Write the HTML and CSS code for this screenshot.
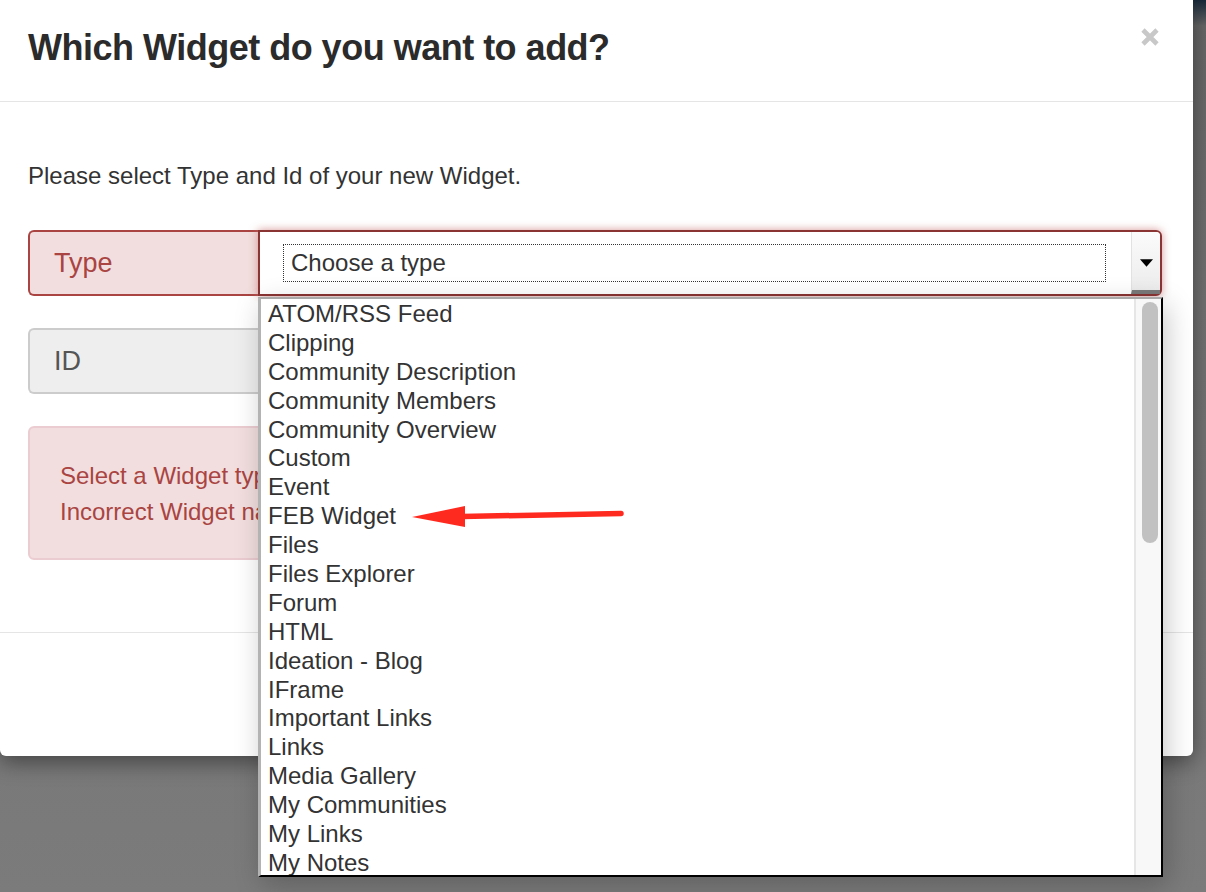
FILE: index.html
```html
<!DOCTYPE html>
<html lang="en">
<head>
<meta charset="utf-8">
<title>Which Widget do you want to add?</title>
<link rel="stylesheet" href="styles.css">
</head>
<body>
<div class="backdrop">
  <div class="modal">
    <div class="modal-header">
      <h4 class="modal-title">Which Widget do you want to add?</h4>
      <button class="close" type="button" aria-label="Close">
        <svg width="20" height="20" viewBox="0 0 20 20"><path d="M3 3 L17 17 M17 3 L3 17" stroke="#c8c8c8" stroke-width="4.6" stroke-linecap="butt"/></svg>
      </button>
    </div>
    <div class="modal-body">
      <p class="intro">Please select Type and Id of your new Widget.</p>
      <div class="input-group has-error">
        <span class="addon addon-error">Type</span>
        <div class="select-wrap">
          <div class="select-box">
            <span class="select-focus">Choose a type</span>
            <span class="select-btn">
              <svg width="14" height="8" viewBox="0 0 14 8"><path d="M0 0 H14 L7 8 Z" fill="#000"/></svg>
            </span>
          </div>
          <div class="dropdown">
            <ul class="options">
              <li>ATOM/RSS Feed</li>
              <li>Clipping</li>
              <li>Community Description</li>
              <li>Community Members</li>
              <li>Community Overview</li>
              <li>Custom</li>
              <li>Event</li>
              <li>FEB Widget</li>
              <li>Files</li>
              <li>Files Explorer</li>
              <li>Forum</li>
              <li>HTML</li>
              <li>Ideation - Blog</li>
              <li>IFrame</li>
              <li>Important Links</li>
              <li>Links</li>
              <li>Media Gallery</li>
              <li>My Communities</li>
              <li>My Links</li>
              <li>My Notes</li>
            </ul>
            <div class="scrolltrack"><div class="scrollthumb"></div></div>
          </div>
        </div>
      </div>
      <div class="input-group">
        <span class="addon addon-plain">ID</span>
        <div class="id-input"></div>
      </div>
      <div class="alert">
        <p>Select a Widget type.</p>
        <p>Incorrect Widget name.</p>
      </div>
    </div>
    <div class="modal-footer"></div>
    <svg class="annot-arrow" width="230" height="40" viewBox="0 0 230 40">
      <path d="M52 22.5 L211 19.5" stroke="#ff2a1f" stroke-width="5.5" stroke-linecap="round"/>
      <path d="M2 23 L55 12 L55 33 Z" fill="#ff2a1f"/>
    </svg>
  </div>
</div>
</body>
</html>
```
FILE: styles.css
```css
html, body {
  margin: 0;
  padding: 0;
}
body {
  width: 1206px;
  height: 892px;
  overflow: hidden;
  background: linear-gradient(180deg, #182838 0px, #2f3b47 8px, #686868 26px, #727272 300px, #7b7b7b 892px);
  font-family: "Liberation Sans", Arial, Helvetica, sans-serif;
  color: #333;
}
.backdrop {
  width: 1206px;
  height: 892px;
}
.modal {
  position: relative;
  width: 1193px;
  background: #fff;
  border-radius: 0 0 6px 6px;
  box-shadow: 0 6px 22px rgba(0, 0, 0, 0.45);
}
.modal-header {
  display: flex;
  justify-content: space-between;
  align-items: flex-start;
  padding: 26px 33px 31px 28px;
  border-bottom: 1px solid #e5e5e5;
}
.modal-title {
  margin: 0;
  font-size: 36px;
  line-height: 44px;
  font-weight: bold;
  color: #2b2b2b;
  letter-spacing: -0.5px;
}
.close {
  margin: 1px 0 0 0;
  padding: 0;
  border: 0;
  background: transparent;
  width: 20px;
  height: 20px;
  display: block;
}
.close svg {
  display: block;
}
.modal-body {
  padding: 57px 31px 72px 28px;
}
.intro {
  margin: 0 0 37px 0;
  font-size: 24px;
  line-height: 34px;
  color: #333;
}
.input-group {
  display: flex;
  height: 66px;
  margin-bottom: 32px;
}
.addon {
  box-sizing: border-box;
  width: 230px;
  height: 66px;
  display: flex;
  align-items: center;
  padding-left: 24px;
  font-size: 27px;
  border-radius: 6px 0 0 6px;
  border-width: 2px 0 2px 2px;
  border-style: solid;
}
.addon-error {
  background: #f2dede;
  border-color: #a94442;
  color: #a94442;
}
.addon-plain {
  background: #eeeeee;
  border-color: #cccccc;
  color: #555;
}
.select-wrap {
  position: relative;
  flex: 1;
}
.select-box {
  box-sizing: border-box;
  height: 66px;
  display: flex;
  align-items: center;
  padding-left: 23px;
  border: 2px solid #8a3434;
  border-radius: 0 6px 6px 0;
  background: #fff;
  box-shadow: 0 0 9px rgba(206, 132, 131, 0.85);
}
.select-focus {
  flex: 1;
  box-sizing: border-box;
  height: 38px;
  line-height: 36px;
  border: 1px dotted #333;
  padding-left: 7px;
  font-size: 24px;
  color: #333;
  margin-right: 25px;
}
.select-btn {
  box-sizing: border-box;
  align-self: stretch;
  width: 29px;
  display: flex;
  align-items: center;
  justify-content: center;
  background: linear-gradient(180deg, #fbfbfb, #ececec);
  border-bottom: 4px solid #7a7a7a;
  border-left: 1px solid #e2e2e2;
  padding-top: 3px;
  border-radius: 0 4px 0 0;
}
.select-btn svg {
  display: block;
  width: 13px;
  height: 8px;
}
.dropdown {
  position: absolute;
  top: 67px;
  left: 0;
  right: -1px;
  height: 580px;
  box-sizing: border-box;
  display: flex;
  background: #fff;
  border-top: 2px solid #a9a9a9;
  border-left: 3px solid #b3b3b3;
  border-right: 2px solid #000;
  border-bottom: 2px solid #000;
  box-shadow: 4px 8px 26px rgba(0, 0, 0, 0.22);
  z-index: 5;
}
.options {
  flex: 1;
  list-style: none;
  margin: 0;
  padding: 1px 0 0 7px;
  overflow: hidden;
}
.options li {
  font-size: 24px;
  line-height: 28.9px;
  height: 28.9px;
  color: #333;
  white-space: nowrap;
}
.scrolltrack {
  width: 27px;
  background: #f8f8f8;
  border-left: 2px solid #e6e6e6;
  padding: 3px 5px 0 6px;
  box-sizing: border-box;
}
.scrollthumb {
  width: 16px;
  height: 241px;
  border-radius: 8px;
  background: #c1c1c1;
}
.id-input {
  flex: 1;
  box-sizing: border-box;
  height: 66px;
  border: 2px solid #ccc;
  border-radius: 0 6px 6px 0;
  background: #fff;
}
.alert {
  box-sizing: border-box;
  height: 134px;
  padding: 30px 30px 0 30px;
  background: #f2dede;
  border: 2px solid #ebccd1;
  border-radius: 6px;
  color: #a94442;
}
.alert p {
  margin: 0;
  font-size: 24px;
  line-height: 36px;
}
.modal-footer {
  height: 123px;
  border-top: 1px solid #e5e5e5;
}
.annot-arrow {
  position: absolute;
  left: 410px;
  top: 494px;
  z-index: 10;
}
```
